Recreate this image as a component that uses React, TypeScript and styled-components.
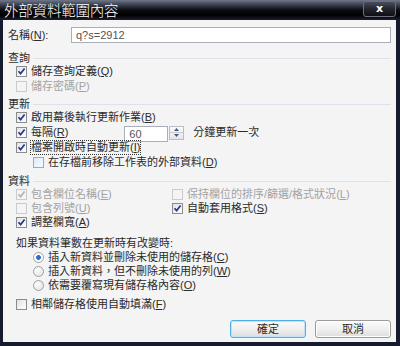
import React from 'react';
import styled, { createGlobalStyle } from 'styled-components';

const GlobalStyle = createGlobalStyle`
  body {
    margin: 0;
    background: #ffffff;
  }
`;

const Window = styled.div`
  width: 400px;
  height: 346px;
  box-sizing: border-box;
  display: flex;
  flex-direction: column;
  background: #171b2e;
  font-family: 'Liberation Sans', 'Noto Sans CJK TC', sans-serif;
  font-size: 11px;
  color: #2b2b2b;
`;

const TitleBar = styled.div`
  height: 20px;
  flex-shrink: 0;
  display: flex;
  align-items: center;
  justify-content: space-between;
  padding: 0 4px 0 4px;
  background: linear-gradient(to bottom, #70768a 0%, #3a3e4c 25%, #0c0d12 50%, #000000 75%, #1b1f30 100%);
`;

const Title = styled.div`
  color: #ffffff;
  font-family: 'Noto Sans CJK TC', sans-serif;
  font-size: 14.5px;
  font-weight: 300;
  line-height: 20px;
  letter-spacing: -0.2px;
`;

const CloseButton = styled.div`
  width: 31px;
  height: 14px;
  margin-top: -2px;
  border: 1px solid #6c6f7a;
  border-radius: 3px;
  background: linear-gradient(to bottom, #4a4e5c 0%, #22252e 50%, #0e0f14 100%);
  color: #ffffff;
  font-family: 'DejaVu Sans', sans-serif;
  font-weight: bold;
  font-size: 11px;
  line-height: 13px;
  text-align: center;
`;

const Client = styled.div`
  flex: 1;
  margin: 0 4px 4px 3px;
  padding: 7px 5px 0 5px;
  background: #f4f4f4;
  display: flex;
  flex-direction: column;
`;

const NameRow = styled.div`
  display: flex;
  align-items: center;
  height: 16px;
`;

const NameLabel = styled.div`
  width: 63px;
  line-height: 16px;
`;

const TextBox = styled.div<{ $width?: number }>`
  box-sizing: border-box;
  height: 16px;
  ${(p) => (p.$width ? `width: ${p.$width}px;` : 'flex: 1;')}
  border: 1px solid #a8afb8;
  background: #ffffff;
  padding-left: 4px;
  line-height: 14px;
  color: #555;
`;

const SectionHead = styled.div<{ $top: number }>`
  display: flex;
  align-items: center;
  height: 14px;
  margin-top: ${(p) => p.$top}px;
`;

const SectionLine = styled.div`
  flex: 1;
  height: 1px;
  margin-left: 3px;
  margin-top: 2px;
  background: #dce2ea;
`;

const Row = styled.div<{ $indent: number; $h?: number; $top?: number }>`
  display: flex;
  align-items: center;
  height: ${(p) => p.$h ?? 15}px;
  margin-top: ${(p) => p.$top ?? 0}px;
  padding-left: ${(p) => p.$indent}px;
`;

const Box = styled.span<{ $disabled?: boolean; $hot?: boolean }>`
  box-sizing: border-box;
  width: 11px;
  height: 11px;
  margin-right: 4px;
  flex-shrink: 0;
  display: flex;
  align-items: center;
  justify-content: center;
  border: 1px solid ${(p) => (p.$disabled ? '#cbcbcb' : p.$hot ? '#7fb2e3' : '#8c8c8c')};
  background: ${(p) =>
    p.$hot ? 'linear-gradient(135deg, #dcebfa, #f6fbff)' : p.$disabled ? '#f4f4f4' : 'linear-gradient(135deg, #e2e2e2, #ffffff)'};
`;

const Label = styled.span<{ $disabled?: boolean; $focus?: boolean }>`
  color: ${(p) => (p.$disabled ? '#a3a3a3' : '#2b2b2b')};
  line-height: 13px;
  white-space: nowrap;
  ${(p) => (p.$focus ? 'outline: 1px dotted #333; outline-offset: 0px;' : '')}
`;

const Key = styled.u`
  text-decoration: underline;
`;

const Check = ({ disabled }: { disabled?: boolean }) => (
  <svg width="9" height="9" viewBox="0 0 9 9">
    <path d="M1.5 4.2 L3.6 6.6 L7.6 1.4" fill="none" stroke={disabled ? '#b4b4b4' : '#23388f'} strokeWidth="1.7" />
  </svg>
);

type CheckProps = {
  checked?: boolean;
  disabled?: boolean;
  hot?: boolean;
  focus?: boolean;
  text: string;
  k: string;
};

const CheckItem = ({ checked, disabled, hot, focus, text, k }: CheckProps) => (
  <>
    <Box $disabled={disabled} $hot={hot}>
      {checked && <Check disabled={disabled} />}
    </Box>
    <Label $disabled={disabled} $focus={focus}>
      {text}(<Key>{k}</Key>)
    </Label>
  </>
);

const Radio = styled.span<{ $on?: boolean }>`
  box-sizing: border-box;
  width: 11px;
  height: 11px;
  margin-right: 4px;
  border-radius: 50%;
  border: 1px solid #a0a0a0;
  background: ${(p) =>
    p.$on
      ? 'radial-gradient(circle, #2f6fd0 0, #2f6fd0 2px, #ffffff 2.8px)'
      : 'radial-gradient(circle at 35% 35%, #ffffff, #dedede)'};
`;

const Spin = styled.div`
  display: flex;
  height: 14px;
  margin-left: 56px;
`;

const SpinButtons = styled.div`
  box-sizing: border-box;
  width: 15px;
  height: 14px;
  margin-left: 1px;
  display: flex;
  flex-direction: column;
  border: 1px solid #b8bec6;
  background: linear-gradient(to bottom, #fafafa, #e4e6ea);
`;

const SpinHalf = styled.div`
  flex: 1;
  display: flex;
  align-items: center;
  justify-content: center;
  & + & {
    border-top: 1px solid #c8ccd2;
  }
`;

const Tri = ({ up }: { up?: boolean }) => (
  <svg width="5" height="3" viewBox="0 0 5 3">
    <path d={up ? 'M0 3 L2.5 0 L5 3 Z' : 'M0 0 L2.5 3 L5 0 Z'} fill="#4a5a78" />
  </svg>
);

const After = styled.span`
  margin-left: 9px;
  line-height: 13px;
`;

const DataGrid = styled.div`
  display: grid;
  grid-template-columns: 156px 1fr;
  padding-left: 8px;
`;

const Cell = styled.div`
  display: flex;
  align-items: center;
  height: 14px;
`;

const Plain = styled.div`
  height: 14px;
  margin-top: 7px;
  padding-left: 8px;
  line-height: 14px;
`;

const ButtonRow = styled.div`
  display: flex;
  justify-content: flex-end;
  gap: 9px;
  margin-top: 9px;
`;

const Button = styled.div<{ $default?: boolean }>`
  box-sizing: border-box;
  width: 76px;
  height: 18px;
  border-radius: 3px;
  border: 1px solid ${(p) => (p.$default ? '#4fb0e6' : '#9a9a9a')};
  box-shadow: inset 0 0 0 1px ${(p) => (p.$default ? '#bfe3f7' : '#ffffff')};
  background: linear-gradient(to bottom, #fafafa 0%, #f0f0f0 50%, #dedede 100%);
  text-align: center;
  line-height: 16px;
  color: #2b2b2b;
`;

export default function App() {
  return (
    <>
      <GlobalStyle />
      <Window>
        <TitleBar>
          <Title>外部資料範圍內容</Title>
          <CloseButton>x</CloseButton>
        </TitleBar>
        <Client>
          <NameRow>
            <NameLabel>
              名稱(<Key>N</Key>):
            </NameLabel>
            <TextBox>q?s=2912</TextBox>
          </NameRow>

          <SectionHead $top={7}>
            查詢
            <SectionLine />
          </SectionHead>
          <Row $indent={8}>
            <CheckItem checked text="儲存查詢定義" k="Q" />
          </Row>
          <Row $indent={8}>
            <CheckItem disabled text="儲存密碼" k="P" />
          </Row>

          <SectionHead $top={2}>
            更新
            <SectionLine />
          </SectionHead>
          <Row $indent={8}>
            <CheckItem checked text="啟用幕後執行更新作業" k="B" />
          </Row>
          <Row $indent={8}>
            <CheckItem checked text="每隔" k="R" />
            <Spin>
              <TextBox $width={44}>60</TextBox>
              <SpinButtons>
                <SpinHalf>
                  <Tri up />
                </SpinHalf>
                <SpinHalf>
                  <Tri />
                </SpinHalf>
              </SpinButtons>
            </Spin>
            <After>分鐘更新一次</After>
          </Row>
          <Row $indent={8}>
            <CheckItem checked focus text="檔案開啟時自動更新" k="I" />
          </Row>
          <Row $indent={25} $h={14}>
            <CheckItem hot text="在存檔前移除工作表的外部資料" k="D" />
          </Row>

          <SectionHead $top={4}>
            資料
            <SectionLine />
          </SectionHead>
          <DataGrid>
            <Cell>
              <CheckItem checked disabled text="包含欄位名稱" k="E" />
            </Cell>
            <Cell>
              <CheckItem disabled text="保持欄位的排序/篩選/格式狀況" k="L" />
            </Cell>
            <Cell>
              <CheckItem disabled text="包含列號" k="U" />
            </Cell>
            <Cell>
              <CheckItem checked text="自動套用格式" k="S" />
            </Cell>
            <Cell>
              <CheckItem checked text="調整欄寬" k="A" />
            </Cell>
          </DataGrid>

          <Plain>如果資料筆數在更新時有改變時:</Plain>
          <Row $indent={25} $h={14}>
            <Radio $on />
            <Label>
              插入新資料並刪除未使用的儲存格(<Key>C</Key>)
            </Label>
          </Row>
          <Row $indent={25} $h={14}>
            <Radio />
            <Label>
              插入新資料，但不刪除未使用的列(<Key>W</Key>)
            </Label>
          </Row>
          <Row $indent={25} $h={14}>
            <Radio />
            <Label>
              依需要覆寫現有儲存格內容(<Key>O</Key>)
            </Label>
          </Row>

          <Row $indent={8} $h={14} $top={5}>
            <CheckItem text="相鄰儲存格使用自動填滿" k="F" />
          </Row>

          <ButtonRow>
            <Button $default>確定</Button>
            <Button>取消</Button>
          </ButtonRow>
        </Client>
      </Window>
    </>
  );
}
